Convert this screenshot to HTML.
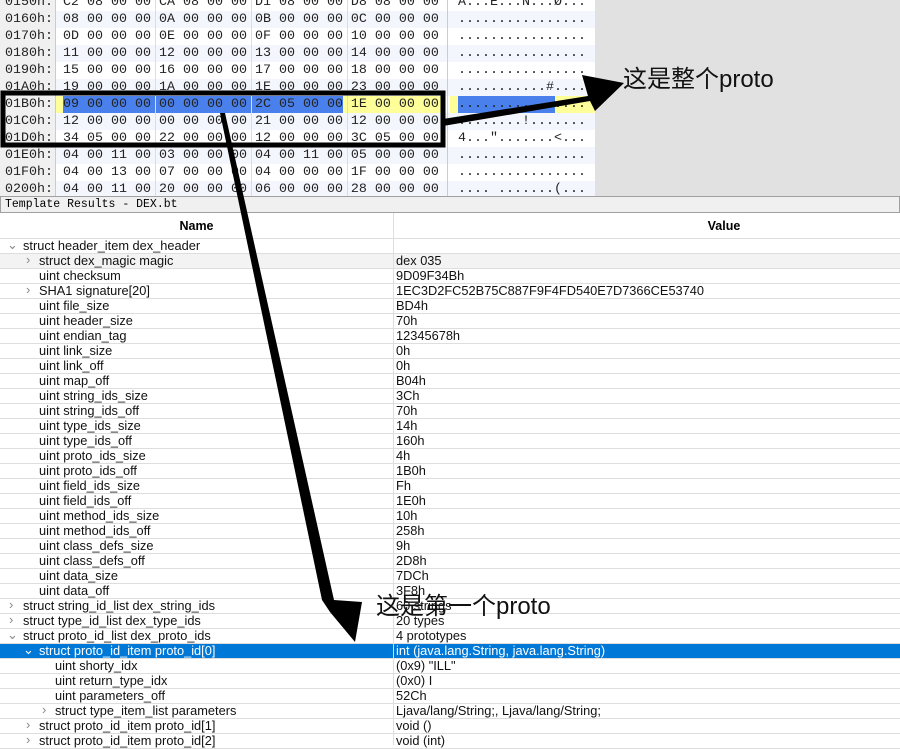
<!DOCTYPE html>
<html><head><meta charset="utf-8"><style>
*{margin:0;padding:0;box-sizing:border-box}
body{width:900px;height:745px;overflow:hidden;background:#fff;position:relative;font-family:"Liberation Sans",sans-serif}
.hex{position:absolute;left:0;top:0;width:595px;height:196px;overflow:hidden;background:#fff}
.hr{position:absolute;left:0;width:595px;height:17px;font-family:"Liberation Mono",monospace;font-size:13.33px;line-height:17px;white-space:pre;color:#222}
.hr.alt{background:#f4f6fd}
.addr{position:absolute;left:0;top:0;width:55px;height:17px;padding-left:5px;background:#f0f0f0}
.bytes{position:absolute;left:63px;top:0}
.asc{position:absolute;left:458px;top:0}
.gray{position:absolute;left:595px;top:0;width:305px;height:196px;background:#e1e1e1}
.tb{position:absolute;left:0;top:196px;width:900px;height:17px;background:#f0f0f0;border:1px solid #a0a0a0;font-family:"Liberation Mono",monospace;font-size:11.5px;line-height:15px;padding-left:4px}
.hd{position:absolute;top:213px;height:26px;font-weight:bold;font-size:12.5px;line-height:26px;text-align:center}
.row{position:absolute;left:0;width:900px;height:15px;font-size:12.8px;line-height:14px;border-bottom:1px solid #dedede;color:#111;white-space:nowrap}
.row .n{position:absolute;top:0}
.row .v{position:absolute;left:396px;top:0}
.row .ar{position:absolute;top:-1px;color:#888;font-size:13px}
.sel{background:#0078d7;color:#fff}
.sel .ar{color:#fff}
.vl{position:absolute;left:393px;top:213px;width:1px;height:532px;background:#dedede}
.ann{position:absolute;font-family:"Liberation Sans","Noto Sans CJK SC",sans-serif;font-size:24px;color:#111;line-height:28px}
</style></head><body>
<div class="hex">
<div class="hr" style="top:-6px"><span class="addr">0150h:</span><span class="bytes">C2 08 00 00 CA 08 00 00 D1 08 00 00 D8 08 00 00</span><span class="asc">A...E...N...Ø...</span></div>
<div class="hr alt" style="top:11px"><span class="addr">0160h:</span><span class="bytes">08 00 00 00 0A 00 00 00 0B 00 00 00 0C 00 00 00</span><span class="asc">................</span></div>
<div class="hr" style="top:28px"><span class="addr">0170h:</span><span class="bytes">0D 00 00 00 0E 00 00 00 0F 00 00 00 10 00 00 00</span><span class="asc">................</span></div>
<div class="hr alt" style="top:45px"><span class="addr">0180h:</span><span class="bytes">11 00 00 00 12 00 00 00 13 00 00 00 14 00 00 00</span><span class="asc">................</span></div>
<div class="hr" style="top:62px"><span class="addr">0190h:</span><span class="bytes">15 00 00 00 16 00 00 00 17 00 00 00 18 00 00 00</span><span class="asc">................</span></div>
<div class="hr alt" style="top:79px"><span class="addr">01A0h:</span><span class="bytes">19 00 00 00 1A 00 00 00 1E 00 00 00 23 00 00 00</span><span class="asc">...........#....</span></div>
<div class="hr" style="top:96px">
<div style="position:absolute;left:55px;top:0;width:8px;height:17px;background:#ffff99"></div>
<div style="position:absolute;left:63px;top:0;width:280px;height:17px;background:#4a80ec"></div>
<div style="position:absolute;left:343px;top:0;width:100px;height:17px;background:#ffff99"></div>
<div style="position:absolute;left:450px;top:0;width:8px;height:17px;background:#ffff99"></div>
<div style="position:absolute;left:458px;top:0;width:97px;height:17px;background:#4a80ec"></div>
<div style="position:absolute;left:555px;top:0;width:40px;height:17px;background:#ffff99"></div>
<span class="addr">01B0h:</span><span class="bytes">09 00 00 00 00 00 00 00 2C 05 00 00 1E 00 00 00</span><span class="asc">................</span></div>
<div class="hr alt" style="top:113px"><span class="addr">01C0h:</span><span class="bytes">12 00 00 00 00 00 00 00 21 00 00 00 12 00 00 00</span><span class="asc">........!.......</span></div>
<div class="hr" style="top:130px"><span class="addr">01D0h:</span><span class="bytes">34 05 00 00 22 00 00 00 12 00 00 00 3C 05 00 00</span><span class="asc">4...".......&lt;...</span></div>
<div class="hr alt" style="top:147px"><span class="addr">01E0h:</span><span class="bytes">04 00 11 00 03 00 00 00 04 00 11 00 05 00 00 00</span><span class="asc">................</span></div>
<div class="hr" style="top:164px"><span class="addr">01F0h:</span><span class="bytes">04 00 13 00 07 00 00 00 04 00 00 00 1F 00 00 00</span><span class="asc">................</span></div>
<div class="hr alt" style="top:181px"><span class="addr">0200h:</span><span class="bytes">04 00 11 00 20 00 00 00 06 00 00 00 28 00 00 00</span><span class="asc">.... .......(...</span></div>
<div style="position:absolute;left:55px;top:0;width:1px;height:196px;background:#ccc"></div>
<div style="position:absolute;left:155px;top:0;width:1px;height:196px;background:#ddd"></div>
<div style="position:absolute;left:251px;top:0;width:1px;height:196px;background:#ddd"></div>
<div style="position:absolute;left:347px;top:0;width:1px;height:196px;background:#ddd"></div>
<div style="position:absolute;left:447px;top:0;width:1px;height:196px;background:#ccc"></div>
</div>
<div class="gray"></div>
<div class="tb">Template Results - DEX.bt</div>
<div class="hd" style="left:0;width:393px">Name</div>
<div class="hd" style="left:393px;width:662px">Value</div>
<div style="position:absolute;left:0;top:238px;width:900px;height:1px;background:#dedede"></div>
<div class="row" style="top:239px"><span class="ar" style="left:7px">⌄</span><span class="n" style="left:23px">struct header_item dex_header</span></div>
<div class="row" style="top:254px;background:#f3f3f3"><span class="ar" style="left:26px">›</span><span class="n" style="left:39px">struct dex_magic magic</span><span class="v">dex 035</span></div>
<div class="row" style="top:269px"><span class="n" style="left:39px">uint checksum</span><span class="v">9D09F34Bh</span></div>
<div class="row" style="top:284px"><span class="ar" style="left:26px">›</span><span class="n" style="left:39px">SHA1 signature[20]</span><span class="v">1EC3D2FC52B75C887F9F4FD540E7D7366CE53740</span></div>
<div class="row" style="top:299px"><span class="n" style="left:39px">uint file_size</span><span class="v">BD4h</span></div>
<div class="row" style="top:314px"><span class="n" style="left:39px">uint header_size</span><span class="v">70h</span></div>
<div class="row" style="top:329px"><span class="n" style="left:39px">uint endian_tag</span><span class="v">12345678h</span></div>
<div class="row" style="top:344px"><span class="n" style="left:39px">uint link_size</span><span class="v">0h</span></div>
<div class="row" style="top:359px"><span class="n" style="left:39px">uint link_off</span><span class="v">0h</span></div>
<div class="row" style="top:374px"><span class="n" style="left:39px">uint map_off</span><span class="v">B04h</span></div>
<div class="row" style="top:389px"><span class="n" style="left:39px">uint string_ids_size</span><span class="v">3Ch</span></div>
<div class="row" style="top:404px"><span class="n" style="left:39px">uint string_ids_off</span><span class="v">70h</span></div>
<div class="row" style="top:419px"><span class="n" style="left:39px">uint type_ids_size</span><span class="v">14h</span></div>
<div class="row" style="top:434px"><span class="n" style="left:39px">uint type_ids_off</span><span class="v">160h</span></div>
<div class="row" style="top:449px"><span class="n" style="left:39px">uint proto_ids_size</span><span class="v">4h</span></div>
<div class="row" style="top:464px"><span class="n" style="left:39px">uint proto_ids_off</span><span class="v">1B0h</span></div>
<div class="row" style="top:479px"><span class="n" style="left:39px">uint field_ids_size</span><span class="v">Fh</span></div>
<div class="row" style="top:494px"><span class="n" style="left:39px">uint field_ids_off</span><span class="v">1E0h</span></div>
<div class="row" style="top:509px"><span class="n" style="left:39px">uint method_ids_size</span><span class="v">10h</span></div>
<div class="row" style="top:524px"><span class="n" style="left:39px">uint method_ids_off</span><span class="v">258h</span></div>
<div class="row" style="top:539px"><span class="n" style="left:39px">uint class_defs_size</span><span class="v">9h</span></div>
<div class="row" style="top:554px"><span class="n" style="left:39px">uint class_defs_off</span><span class="v">2D8h</span></div>
<div class="row" style="top:569px"><span class="n" style="left:39px">uint data_size</span><span class="v">7DCh</span></div>
<div class="row" style="top:584px"><span class="n" style="left:39px">uint data_off</span><span class="v">3F8h</span></div>
<div class="row" style="top:599px"><span class="ar" style="left:9px">›</span><span class="n" style="left:23px">struct string_id_list dex_string_ids</span><span class="v">60 strings</span></div>
<div class="row" style="top:614px"><span class="ar" style="left:9px">›</span><span class="n" style="left:23px">struct type_id_list dex_type_ids</span><span class="v">20 types</span></div>
<div class="row" style="top:629px"><span class="ar" style="left:7px">⌄</span><span class="n" style="left:23px">struct proto_id_list dex_proto_ids</span><span class="v">4 prototypes</span></div>
<div class="row sel" style="top:644px"><span class="ar" style="left:23px">⌄</span><span class="n" style="left:39px">struct proto_id_item proto_id[0]</span><span class="v">int (java.lang.String, java.lang.String)</span></div>
<div class="row" style="top:659px"><span class="n" style="left:55px">uint shorty_idx</span><span class="v">(0x9) "ILL"</span></div>
<div class="row" style="top:674px"><span class="n" style="left:55px">uint return_type_idx</span><span class="v">(0x0) I</span></div>
<div class="row" style="top:689px"><span class="n" style="left:55px">uint parameters_off</span><span class="v">52Ch</span></div>
<div class="row" style="top:704px"><span class="ar" style="left:42px">›</span><span class="n" style="left:55px">struct type_item_list parameters</span><span class="v">Ljava/lang/String;, Ljava/lang/String;</span></div>
<div class="row" style="top:719px"><span class="ar" style="left:26px">›</span><span class="n" style="left:39px">struct proto_id_item proto_id[1]</span><span class="v">void ()</span></div>
<div class="row" style="top:734px"><span class="ar" style="left:26px">›</span><span class="n" style="left:39px">struct proto_id_item proto_id[2]</span><span class="v">void (int)</span></div>
<div class="vl"></div>
<svg style="position:absolute;left:0;top:0" width="900" height="745">
<rect x="3" y="93" width="440" height="52" fill="none" stroke="#000" stroke-width="5"/>
<polygon points="443,119 588,96 582,75 624,83 595,111 590,101 443,126" fill="#000"/>
<polygon points="220,113 225,113 334,600 362,602 355,642 330,612 322,600" fill="#000"/>
</svg>
<div class="ann" style="left:623px;top:66px">这是整个proto</div>
<div class="ann" style="left:376px;top:593px">这是第一个proto</div>
</body></html>
